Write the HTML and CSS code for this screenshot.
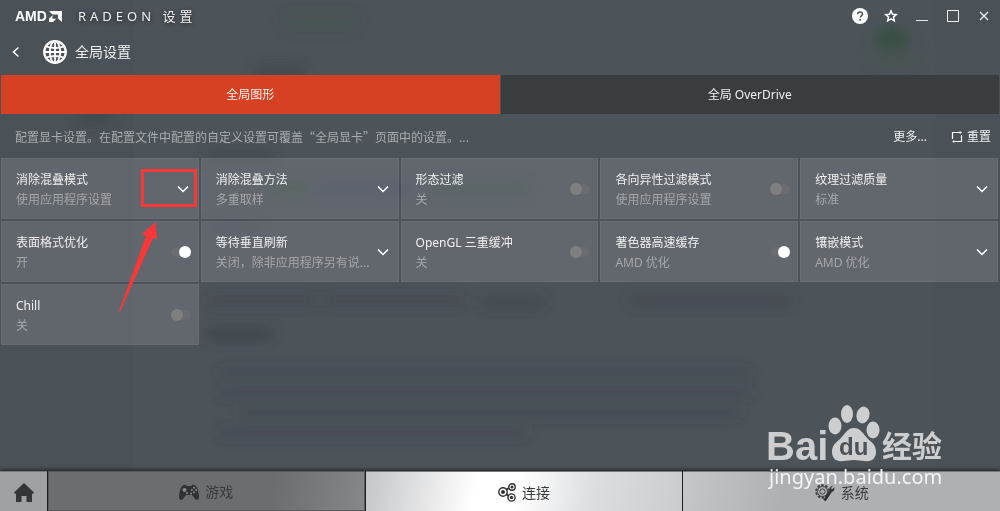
FILE: index.html
```
<!DOCTYPE html>
<html lang="zh-CN">
<head>
  <meta charset="UTF-8">
  <meta name="viewport" content="width=device-width, initial-scale=1.0">
  <title>Radeon 设置</title>
  <link rel="stylesheet" href="styles.css">
</head>
<body>
  <!-- blurred desktop behind the window -->
  <svg class="backdrop" width="1000" height="470" aria-hidden="true">
    <defs>
      <filter id="soft" x="-20%" y="-200%" width="140%" height="500%"><feGaussianBlur stdDeviation="6"/></filter>
    </defs>
    <rect x="0" y="0" width="134" height="470" fill="#454c53" opacity=".25"/>
    <rect x="935" y="0" width="65" height="470" fill="#454c53" opacity=".3"/>
    <g filter="url(#soft)">
      <rect x="283" y="14" width="74" height="16" fill="#3f5648" opacity=".4"/>
      <ellipse cx="892" cy="38" rx="18" ry="12" fill="#35503f" opacity=".8"/>
      <rect x="868" y="52" width="52" height="12" fill="#3f5648" opacity=".5"/>
      <g fill="#3b4249">
        <rect x="255" y="66" width="48" height="10" opacity=".7"/>
        <rect x="78" y="112" width="34" height="10" opacity=".7"/>
        <rect x="208" y="152" width="64" height="8" opacity=".7"/>
        <rect x="210" y="222" width="50" height="10" opacity=".5"/>
        <rect x="210" y="296" width="104" height="10" opacity=".4"/>
        <rect x="326" y="296" width="136" height="10" opacity=".4"/>
        <rect x="482" y="297" width="62" height="10" opacity=".6"/>
        <rect x="630" y="296" width="160" height="10" opacity=".5"/>
        <rect x="207" y="329" width="64" height="11" opacity=".8"/>
      </g>
      <g fill="#3b4249" opacity=".3">
        <rect x="220" y="368" width="530" height="10"/>
        <rect x="220" y="388" width="530" height="10"/>
        <rect x="240" y="408" width="500" height="10"/>
        <rect x="220" y="428" width="306" height="10"/>
      </g>
      <rect x="270" y="182" width="40" height="14" fill="#33513c" opacity=".5"/>
      <rect x="320" y="182" width="90" height="14" fill="#35465e" opacity=".4"/>
      <rect x="430" y="182" width="100" height="14" fill="#33513c" opacity=".4"/>
    </g>
  </svg>

  <header class="titlebar">
    <div class="brand">
      <span class="amd">AMD</span>
      <svg width="13" height="11" viewBox="0 0 13 11" fill="#fff" aria-hidden="true"><path d="M0 0h13v11L9 7.500V3.500H3.500z"/><path d="M3.500 4.200v3.600h3.800L4 11H0V7.500z"/></svg>
      <h1>RADEON 设置</h1>
    </div>
    <div class="window-buttons">
      <button aria-label="帮助"><svg width="18" height="18" viewBox="0 0 18 18"><circle cx="9" cy="9" r="8" fill="#fff"/><path d="M6.700 7.200c0-3.100 4.800-3 4.800-.2 0 1.800-2.300 1.800-2.300 3.600" fill="none" stroke="#4b5258" stroke-width="1.500"/><circle cx="9.200" cy="12.800" r="1" fill="#4b5258"/></svg></button>
      <button aria-label="收藏"><svg width="14" height="14" viewBox="0 0 14 14" fill="none" stroke="#fff" stroke-width="1.500"><path d="M7 1.800l1.500 3.400 3.800.4-2.800 2.500.8 3.700L7 9.900l-3.300 1.900.8-3.700-2.800-2.500 3.800-.4z"/></svg></button>
      <button aria-label="最小化"><svg width="12" height="12" viewBox="0 0 12 12"><path d="M0 10h12v1H0z" fill="#e6e7e8"/></svg></button>
      <button aria-label="最大化"><svg width="12" height="12" viewBox="0 0 12 12" fill="none" stroke="#f2f2f2"><path d="M.5.5h11v11H.5z"/></svg></button>
      <button aria-label="关闭"><svg width="10" height="10" viewBox="0 0 10 10" fill="none" stroke="#f2f2f2" stroke-width="1.300"><path d="M1 1l8 8M9 1L1 9"/></svg></button>
    </div>
  </header>

  <div class="page-title">
    <button aria-label="返回"><svg width="8" height="12" viewBox="0 0 8 12" fill="none" stroke="#fff" stroke-width="1.500"><path d="M6.500 1.500L1.500 6l5 4.500"/></svg></button>
    <svg width="24" height="24" viewBox="0 0 24 24" fill="none" stroke="#fff" stroke-width="1.800" aria-hidden="true"><circle cx="12" cy="12" r="10.800" stroke-width="2.200"/><ellipse cx="12" cy="12" rx="5.200" ry="10.800"/><path d="M12 1v22M1 12h22M3.200 6.500c5 2 12.600 2 17.600 0M3.200 17.500c5-2 12.600-2 17.600 0"/></svg>
    <h2>全局设置</h2>
  </div>

  <div class="tabs" role="tablist">
    <button class="tab active" role="tab" aria-selected="true">全局图形</button>
    <button class="tab" role="tab" aria-selected="false">全局 OverDrive</button>
  </div>

  <main>
    <div class="info-row">
      <p>配置显卡设置。在配置文件中配置的自定义设置可覆盖“全局显卡”页面中的设置。...</p>
      <button>更多...</button>
      <button class="reset"><svg width="12" height="12" viewBox="0 0 12 12" fill="none" stroke="#fff" stroke-width="1.200" aria-hidden="true"><path d="M1.500 8V1.500H10M10.500 4v6.500H2"/><path d="M8.800 0l2.200 1.500L8.800 3zM3.200 9L1 10.500 3.200 12z" fill="#fff" stroke="none"/></svg>重置</button>
    </div>

    <div class="settings">
      <div class="card">
        <div class="card-text">
          <label for="aa-mode">消除混叠模式</label>
          <select id="aa-mode"><option>使用应用程序设置</option></select>
        </div>
        <svg class="chevron" viewBox="0 0 12 8"><path d="M1 1.500l5 5 5-5"/></svg>
        <div class="callout">
          <svg width="40" height="92" viewBox="0 0 40 92"><path d="M36.500 0L38 17l-4-1L1 90l-1-1 27-75-4-2z" fill="#fb3837"/></svg>
        </div>
      </div>
      <div class="card">
        <div class="card-text">
          <label for="aa-method">消除混叠方法</label>
          <select id="aa-method"><option>多重取样</option></select>
        </div>
        <svg class="chevron" viewBox="0 0 12 8"><path d="M1 1.500l5 5 5-5"/></svg>
      </div>
      <div class="card">
        <div class="card-text">
          <label for="morph">形态过滤</label>
          <span>关</span>
        </div>
        <input type="checkbox" class="toggle" id="morph">
      </div>
      <div class="card">
        <div class="card-text">
          <label for="aniso">各向异性过滤模式</label>
          <span>使用应用程序设置</span>
        </div>
        <input type="checkbox" class="toggle" id="aniso">
      </div>
      <div class="card">
        <div class="card-text">
          <label for="texture">纹理过滤质量</label>
          <select id="texture"><option>标准</option></select>
        </div>
        <svg class="chevron" viewBox="0 0 12 8"><path d="M1 1.500l5 5 5-5"/></svg>
      </div>
      <div class="card">
        <div class="card-text">
          <label for="surface">表面格式优化</label>
          <span>开</span>
        </div>
        <input type="checkbox" class="toggle" id="surface" checked>
      </div>
      <div class="card">
        <div class="card-text">
          <label for="vsync">等待垂直刷新</label>
          <select id="vsync"><option>关闭，除非应用程序另有说...</option></select>
        </div>
        <svg class="chevron" viewBox="0 0 12 8"><path d="M1 1.500l5 5 5-5"/></svg>
      </div>
      <div class="card">
        <div class="card-text">
          <label for="opengl">OpenGL 三重缓冲</label>
          <span>关</span>
        </div>
        <input type="checkbox" class="toggle" id="opengl">
      </div>
      <div class="card">
        <div class="card-text">
          <label for="shader">著色器高速缓存</label>
          <span>AMD 优化</span>
        </div>
        <input type="checkbox" class="toggle" id="shader" checked>
      </div>
      <div class="card">
        <div class="card-text">
          <label for="tess">镶嵌模式</label>
          <select id="tess"><option>AMD 优化</option></select>
        </div>
        <svg class="chevron" viewBox="0 0 12 8"><path d="M1 1.500l5 5 5-5"/></svg>
      </div>
      <div class="card">
        <div class="card-text">
          <label for="chill">Chill</label>
          <span>关</span>
        </div>
        <input type="checkbox" class="toggle" id="chill">
      </div>
    </div>
  </main>

  <nav class="bottom-nav">
    <a href="#home" class="home" aria-label="主页"><svg width="20" height="20" viewBox="0 0 20 20" fill="#343537"><path d="M10 0l10 9.500-1 1.200h-1V19h-5.500v-6h-5v6H2v-8.300H1L0 9.500z"/></svg></a>
    <a href="#games" class="games"><svg width="20" height="17" viewBox="0 0 20 17"><path d="M3 2l3-1.500L8 2h4l2-1.500L17 2c2 3 3 8 3 11 0 2-1 3-3 3l-4-5H7l-4 5c-2 0-3-1-3-3C0 10 1 5 3 2z" fill="#303133"/><g fill="#8b8c8e"><circle cx="5.500" cy="6" r="2"/><circle cx="15" cy="3.800" r="1"/><circle cx="15" cy="8.200" r="1"/><circle cx="12.800" cy="6" r="1"/><circle cx="17.200" cy="6" r="1"/><circle cx="8" cy="9" r="1"/><circle cx="12" cy="9.500" r="1"/></g></svg>游戏</a>
    <a href="#connect" class="connect"><svg width="18" height="19" viewBox="0 0 18 19" fill="none" stroke="#303133" stroke-width="1.400"><path d="M8 7l3-2M8 11l3 2" stroke-width="2"/><circle cx="5" cy="9" r="4.200"/><circle cx="14" cy="4" r="3.200"/><circle cx="13.500" cy="14.500" r="3.600"/><g fill="#303133" stroke="none"><circle cx="5" cy="9" r="2"/><circle cx="14" cy="4" r="1.500"/><circle cx="13.500" cy="14.500" r="1.700"/></g></svg>连接</a>
    <a href="#system" class="system"><svg width="20" height="18" viewBox="0 0 20 18" fill="none" stroke="#404143"><circle cx="7.500" cy="7.500" r="6.300" stroke-width="2" stroke-dasharray="2.500 1.458"/><circle cx="7.500" cy="7.500" r="5"/><circle cx="7.500" cy="7.500" r="2.600"/><path d="M9.500 16.500l6-9" stroke="#303133" stroke-width="2.800"/><path d="M18 1.500l-2 2.700 1 1.300 2.200-2.200c1 3-1 5-3.700 4.700-2-1.500-1.500-5.500 2.500-6.500z" fill="#303133" stroke="none"/></svg>系统</a>
  </nav>

  <svg class="watermark" width="180" height="90" viewBox="0 0 180 90">
    <g fill="#cdcecf">
      <text class="wm-bai" x="-2" y="59">Bai</text>
      <ellipse cx="67" cy="25" rx="6.500" ry="8.500"/>
      <ellipse cx="79" cy="13" rx="6" ry="9"/>
      <ellipse cx="95" cy="14" rx="6.500" ry="8.500" transform="rotate(12 95 14)"/>
      <ellipse cx="105" cy="29" rx="6.500" ry="8.500"/>
      <path d="M86 27c7 0 9 6 14 11 5 4 8 7 8 13 0 7-5 10-11 9-4 0-7-1-11-1s-7 1-11 1c-6 1-11-2-11-9 0-6 3-9 8-13 5-5 7-11 14-11z"/>
      <text class="wm-cn" x="114" y="56">经验</text>
    </g>
    <text class="wm-du" x="71" y="54" fill="#4b5258">du</text>
    <text class="wm-url" x="1" y="83" fill="#f4f4f4">jingyan.baidu.com</text>
  </svg>
</body>
</html>
```
FILE: styles.css
```
* {
  box-sizing: border-box;
}

body {
  position: relative;
  margin: 0;
  min-height: 100vh;
  display: flex;
  flex-direction: column;
  overflow-x: hidden;
  background: #4c5359;
  color: #f0f0f0;
  font-family: "Noto Sans", "Noto Sans CJK SC", sans-serif;
  font-size: 12px;
  line-height: 20px;
}

button, select {
  font: inherit;
  color: inherit;
  background: none;
  border: none;
  padding: 0;
  cursor: pointer;
}

h1, h2, p {
  margin: 0;
  font-weight: normal;
}

.backdrop {
  position: absolute;
  top: 0;
  left: 0;
  z-index: -1;
}

.titlebar {
  display: flex;
  justify-content: space-between;
  align-items: center;
  height: 32px;
  padding: 0 4px 0 15px;
}

.brand {
  display: flex;
  align-items: center;
  gap: 2px;
}

.amd {
  font-family: "Liberation Sans", sans-serif;
  font-size: 14px;
  font-weight: bold;
  color: #fff;
}

.brand h1 {
  margin-left: 14px;
  font-size: 13px;
  letter-spacing: 4px;
  text-shadow: 0 1px 4px #22262a;
}

.window-buttons {
  display: flex;
  gap: 7px;
}

.window-buttons button {
  display: flex;
  align-items: center;
  justify-content: center;
  width: 24px;
  height: 24px;
}

.page-title {
  display: flex;
  align-items: center;
  height: 43px;
  padding: 0 12px 4px;
}

.page-title button {
  display: flex;
  width: 31px;
}

.page-title h2 {
  margin-left: 8px;
  font-size: 14px;
}

.tabs {
  display: grid;
  grid-template-columns: 1fr 1fr;
  gap: 1px;
  padding: 0 1px;
}

.tab {
  height: 39px;
  background: #393d40;
}

.tab.active {
  background: #d64123;
}

main {
  flex: 1;
}

.info-row {
  display: flex;
  align-items: center;
  height: 44px;
  padding: 1px 9px 0 15px;
}

.info-row p {
  flex: 1;
  color: #a9acae;
  font-family: "Noto Sans CJK SC", sans-serif;
}

.reset {
  display: flex;
  align-items: center;
  gap: 4px;
  margin-left: 24px;
}

.settings {
  display: grid;
  grid-template-columns: repeat(5, 1fr);
  gap: 2px;
  padding: 0 2px 0 1px;
}

.card {
  position: relative;
  display: flex;
  align-items: center;
  justify-content: space-between;
  height: 61px;
  padding: 0 7px 0 14px;
  background: rgba(140, 140, 148, 0.35);
  border: 1px solid rgba(140, 140, 148, 0.15);
}

.card-text {
  display: flex;
  flex-direction: column;
  flex: 1;
  min-width: 0;
  padding-top: 2px;
}

.card-text span,
.card-text select {
  height: 20px;
  color: #a6a7a9;
}

.card-text select {
  appearance: none;
  text-align: left;
}

.chevron {
  width: 12px;
  height: 8px;
  margin-right: 2px;
  fill: none;
  stroke: #fff;
  stroke-width: 1.5;
}

.toggle {
  appearance: none;
  display: flex;
  align-items: center;
  width: 20px;
  height: 10px;
  margin: 0;
  border-radius: 5px;
  background: #6a6c6f;
}

.toggle::before {
  content: "";
  width: 12px;
  height: 12px;
  flex: none;
  border-radius: 50%;
  background: #807f7f;
}

.toggle:checked {
  justify-content: flex-end;
}

.toggle:checked::before {
  background: #fff;
}

/* red marker over the first drop-down */
.callout {
  position: absolute;
  z-index: 1;
  top: 10px;
  right: 1px;
  width: 56px;
  height: 38px;
  border: 3px solid #fb3837;
  pointer-events: none;
}

.callout svg {
  position: absolute;
  top: 50px;
  left: -25px;
}

.bottom-nav {
  display: grid;
  grid-template-columns: 47px 1fr 1fr 1fr;
  gap: 1px;
  height: 40px;
  background: #1c1d1f;
  box-shadow: 0 -1px 4px #1c1d1f;
}

.bottom-nav a {
  display: flex;
  align-items: center;
  justify-content: center;
  gap: 6px;
  padding-top: 2px;
  border-top: 1px solid #77787a;
  color: #3a3b3d;
  font-size: 14px;
  text-decoration: none;
}

.home {
  background: #a0a1a5;
}

.bottom-nav .games {
  border: 1px solid #5a5b5d;
  background: linear-gradient(100deg, #6c6d6f 70%, #868789);
}

.connect {
  background: linear-gradient(100deg, #c4c5c7, #fff 35%, #fff 48%, #dcdddf 72%, #cbccce);
}

.system {
  background: linear-gradient(100deg, #c6c7c9, #afb0b4 32%);
}

.watermark {
  position: absolute;
  right: 52px;
  bottom: 20px;
  pointer-events: none;
  overflow: visible;
}

.wm-bai,
.wm-du {
  font-family: "Liberation Sans", sans-serif;
  font-size: 40px;
  font-weight: bold;
}

.wm-du {
  font-size: 24px;
}

.wm-cn {
  font-family: "Noto Sans CJK SC", sans-serif;
  font-size: 30px;
  font-weight: bold;
}

.wm-url {
  font-size: 20px;
}
```
